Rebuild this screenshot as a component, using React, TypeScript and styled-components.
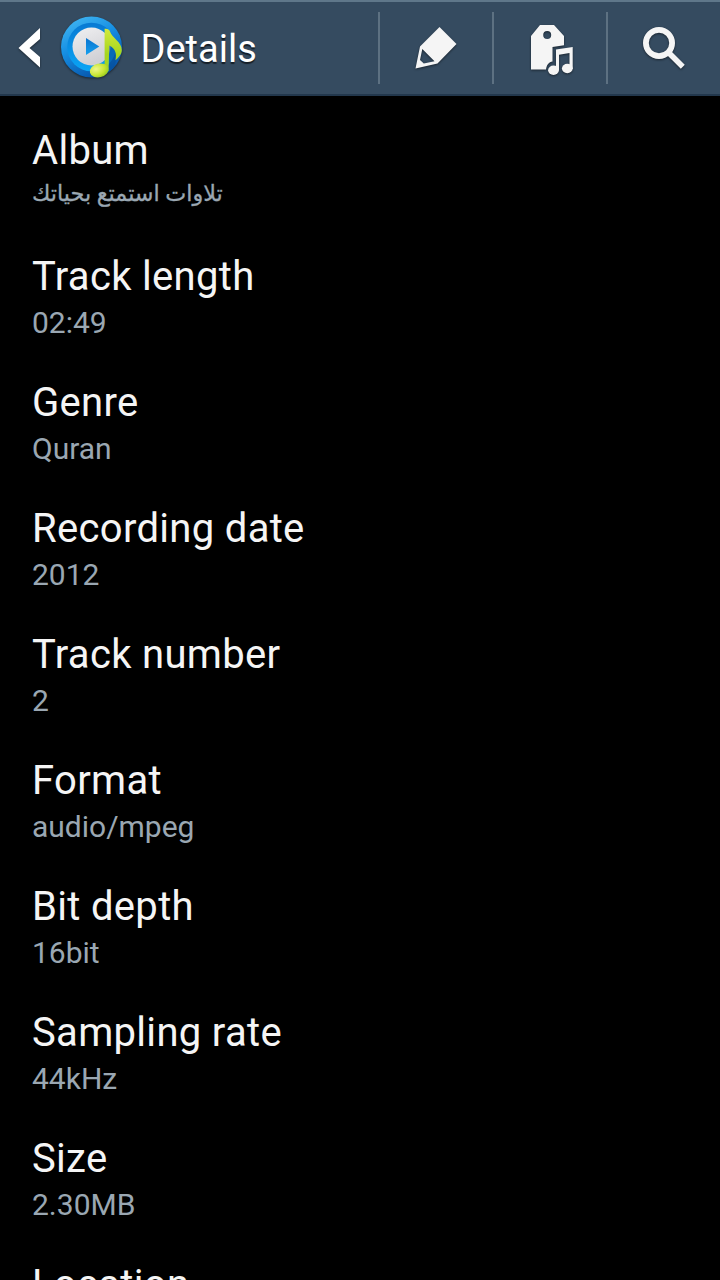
import React from 'react';
import styled, { createGlobalStyle } from 'styled-components';

const GlobalStyle = createGlobalStyle`
  html, body {
    margin: 0;
    background: #000;
  }
  body {
    font-family: Roboto, 'DejaVu Sans', sans-serif;
  }
`;

const Screen = styled.div`
  display: flex;
  flex-direction: column;
  width: 720px;
  height: 1280px;
  overflow: hidden;
  background: #000;
`;

const ActionBar = styled.header`
  box-sizing: border-box;
  flex: none;
  display: flex;
  align-items: stretch;
  height: 96px;
  padding: 10px 0 10px;
  border-top: 2px solid #5f778a;
  border-bottom: 2px solid #22374c;
  background: #354b60;
`;

const UpButton = styled.button`
  flex: 1;
  display: flex;
  align-items: center;
  gap: 14px;
  margin: -10px 0;
  padding: 0 0 0 16px;
  border: 0;
  background: none;
  font-family: inherit;
`;

const Heading = styled.h1`
  margin: 2px 0 0 0.5px;
  color: #fff;
  font-size: 38px;
  line-height: 46px;
  font-weight: 400;
  text-shadow: 0 2px 1px rgba(0, 0, 0, 0.6);
`;

const Action = styled.button`
  box-sizing: border-box;
  display: flex;
  align-items: center;
  justify-content: center;
  width: 114px;
  padding: 0;
  border: 0;
  border-left: 2px solid #5d7182;
  background: none;
`;

const Glyph = styled.svg`
  display: block;
  flex: none;
  overflow: visible;
  filter: drop-shadow(0 1px 1px rgba(0, 0, 0, 0.5));
`;

const List = styled.dl`
  margin: 0;
  padding-top: 13px;
`;

const Row = styled.div`
  box-sizing: border-box;
  height: 126px;
  padding: 18px 32px 0;
`;

const Label = styled.dt`
  color: #f5f5f5;
  font-size: 40px;
  line-height: 47px;
  letter-spacing: 0.32px;
`;

const Value = styled.dd<{ $script?: 'arabic' }>`
  margin: 5px 0 0;
  color: #9aa7b2;
  font-size: ${(p) => (p.$script ? 22.3 : 30)}px;
  line-height: ${(p) => (p.$script ? 28 : 35)}px;
  -webkit-text-stroke: ${(p) => (p.$script ? '0.3px #9aa7b2' : '0')};
`;

const BackIcon = () => (
  <Glyph width="28" height="48" viewBox="16 24 28 48">
    <path d="M40 28V39L29.5 48L40 57V67.5L18.5 48Z" fill="#fff" />
  </Glyph>
);

const MusicLogo = () => (
  <Glyph width="68" height="68" viewBox="58 14 68 68">
    <defs>
      <linearGradient id="rim" x1="0" y1="0" x2="0.5" y2="1">
        <stop offset="0" stopColor="#49bdf5" />
        <stop offset="0.5" stopColor="#168fe3" />
        <stop offset="1" stopColor="#0757ad" />
      </linearGradient>
      <linearGradient id="dish" x1="0" y1="0" x2="0" y2="1">
        <stop offset="0" stopColor="#0879d3" />
        <stop offset="1" stopColor="#0aa5f5" />
      </linearGradient>
      <linearGradient id="disc" x1="0" y1="0" x2="0.4" y2="1">
        <stop offset="0" stopColor="#f0f0f2" />
        <stop offset="1" stopColor="#cfcfd4" />
      </linearGradient>
      <linearGradient id="play" x1="0" y1="0" x2="0" y2="1">
        <stop offset="0" stopColor="#0a73cf" />
        <stop offset="1" stopColor="#16a0ef" />
      </linearGradient>
      <linearGradient id="note" x1="0" y1="0" x2="0" y2="1">
        <stop offset="0" stopColor="#d3ea3c" />
        <stop offset="0.6" stopColor="#a6d61e" />
        <stop offset="1" stopColor="#a6d324" />
      </linearGradient>
      <radialGradient id="head" cx="0.35" cy="0.35" r="0.75">
        <stop offset="0" stopColor="#eef78a" />
        <stop offset="0.6" stopColor="#c8e634" />
        <stop offset="1" stopColor="#93c81a" />
      </radialGradient>
      <clipPath id="face">
        <circle cx="91.5" cy="47" r="30.5" />
      </clipPath>
    </defs>
    <circle cx="91.5" cy="47" r="30.5" fill="url(#rim)" />
    <circle cx="91.5" cy="47" r="24.3" fill="url(#dish)" />
    <circle cx="91.5" cy="46.5" r="19" fill="url(#disc)" />
    <path d="M86 38L99.3 46.5L86 55Z" fill="url(#play)" />
    <path
      d="M109 44C114 47 117 51 117 58L112 73L103 77L109 70Z"
      fill="#06529c"
      opacity="0.65"
      clipPath="url(#face)"
    />
    <path
      d="M104.6 28.8C106.5 28.3 109.3 28.8 110 31.5C112 38 121.8 42 121.8 50C121.8 54 119 57.5 115.4 60.3C117 54 115.5 48.5 109.3 45.5L108.5 71H104.6Z"
      fill="url(#note)"
    />
    <ellipse cx="99.2" cy="70.4" rx="9.5" ry="6.8" transform="rotate(-14 99.2 70.4)" fill="url(#head)" />
  </Glyph>
);

const PencilIcon = () => (
  <Glyph width="44" height="44" viewBox="414 25.5 44 44">
    <path
      fill="#f5f5f5"
      fillRule="evenodd"
      d="M439.5 26.5L456.5 43.5L437.5 63L415.5 68L420 46ZM422.3 48.5L420 59.5L423.8 63L434.5 60.8Z"
    />
  </Glyph>
);

const TagMusicIcon = () => (
  <Glyph width="44" height="52" viewBox="528 22 44 52">
    <path
      fill="#f5f5f5"
      fillRule="evenodd"
      d="M540 25H554L564 36V45.3L552.5 47V61.5C549 62 546.5 65 546 69.5H531V36ZM547.2 31A4 4 0 1 0 547.2 39A4 4 0 1 0 547.2 31Z"
    />
    <path fill="#f5f5f5" d="M556 49.5L572.7 47V69H569.5V53L559 54.8V70H556Z" />
    <ellipse cx="553.5" cy="70.3" rx="5.4" ry="4.7" fill="#f5f5f5" />
    <ellipse cx="567.3" cy="68.5" rx="5.4" ry="4.7" fill="#f5f5f5" />
  </Glyph>
);

const SearchIcon = () => (
  <Glyph width="44" height="44" viewBox="642 26 44 44">
    <circle cx="659" cy="43" r="13.1" fill="none" stroke="#f5f5f5" strokeWidth="5.8" />
    <path d="M668.5 52.5L682.8 66.8" stroke="#f5f5f5" strokeWidth="5.6" />
  </Glyph>
);

interface Detail {
  label: string;
  value: string;
  script?: 'arabic';
}

const details: Detail[] = [
  { label: 'Album', value: 'تلاوات استمتع بحياتك', script: 'arabic' },
  { label: 'Track length', value: '02:49' },
  { label: 'Genre', value: 'Quran' },
  { label: 'Recording date', value: '2012' },
  { label: 'Track number', value: '2' },
  { label: 'Format', value: 'audio/mpeg' },
  { label: 'Bit depth', value: '16bit' },
  { label: 'Sampling rate', value: '44kHz' },
  { label: 'Size', value: '2.30MB' },
  { label: 'Location', value: '' },
];

export default function App() {
  return (
    <Screen>
      <GlobalStyle />
      <ActionBar>
        <UpButton>
          <BackIcon />
          <MusicLogo />
          <Heading>Details</Heading>
        </UpButton>
        <Action>
          <PencilIcon />
        </Action>
        <Action>
          <TagMusicIcon />
        </Action>
        <Action>
          <SearchIcon />
        </Action>
      </ActionBar>
      <List>
        {details.map((d) => (
          <Row key={d.label}>
            <Label>{d.label}</Label>
            <Value $script={d.script}>{d.value}</Value>
          </Row>
        ))}
      </List>
    </Screen>
  );
}
